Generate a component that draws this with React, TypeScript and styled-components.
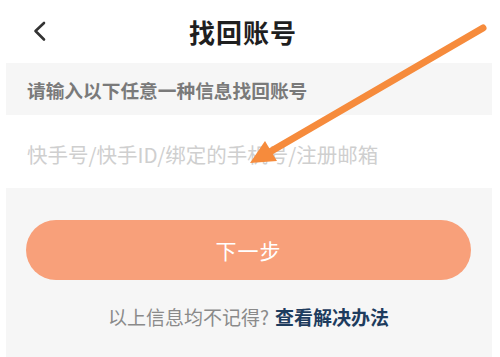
import styled, { createGlobalStyle } from "styled-components";

const GlobalStyle = createGlobalStyle`
  html, body {
    margin: 0;
    padding: 0;
    background: #ffffff;
    font-family: "Noto Sans CJK SC", "Noto Sans", sans-serif;
  }
`;

const Page = styled.div`
  position: relative;
  width: 500px;
  height: 357px;
  overflow: hidden;
  background: #ffffff;
`;

const Header = styled.div`
  position: relative;
  display: flex;
  align-items: center;
  justify-content: center;
  height: 63px;
`;

const Back = styled.div`
  position: absolute;
  left: 32px;
  top: 20px;
  display: flex;
`;

const Title = styled.h1`
  margin: 0 14px 0 0;
  font-size: 26px;
  font-weight: 700;
  color: #1f1f1f;
  letter-spacing: 1px;
`;

const Panel = styled.div`
  margin: 0 8px 0 6px;
  display: flex;
  flex-direction: column;
  background: #f6f6f6;
  height: 294px;
`;

const Hint = styled.div`
  height: 52px;
  display: flex;
  align-items: center;
  padding-left: 21px;
  font-size: 18.7px;
  font-weight: 700;
  color: #7a7a7a;
`;

const InputRow = styled.div`
  height: 73px;
  display: flex;
  align-items: center;
  padding: 4px 0 0 21px;
  box-sizing: border-box;
  background: #ffffff;
`;

const Placeholder = styled.span`
  font-size: 20.5px;
  color: #cfcfcf;
`;

const Actions = styled.div`
  display: flex;
  flex-direction: column;
  align-items: center;
  padding: 32px 21px 0 20px;
`;

const NextButton = styled.button`
  width: 100%;
  height: 60px;
  border: 0;
  border-radius: 30px;
  background: #f8a07a;
  color: #ffffff;
  font-family: inherit;
  font-size: 21px;
  letter-spacing: 1px;
`;

const Footer = styled.div`
  margin-top: 23px;
  font-size: 19px;
  color: #8a8a8a;
  display: flex;
  align-items: center;
`;

const Link = styled.span`
  margin-left: 6px;
  font-weight: 700;
  color: #1e3c5e;
`;

// annotation arrow drawn over the screenshot
const Pointer = styled.svg`
  position: absolute;
  left: 0;
  top: 0;
  pointer-events: none;
`;

const App = () => {
  return (
    <>
      <GlobalStyle />
      <Page>
        <Header>
          <Back>
            <svg width="16" height="22" viewBox="0 0 16 22">
              <path
                d="M12 3 L3.5 11 L12 19.5"
                fill="none"
                stroke="#333"
                strokeWidth="2.6"
                strokeLinecap="round"
                strokeLinejoin="round"
              />
            </svg>
          </Back>
          <Title>找回账号</Title>
        </Header>

        <Panel>
          <Hint>请输入以下任意一种信息找回账号</Hint>
          <InputRow>
            <Placeholder>快手号/快手ID/绑定的手机号/注册邮箱</Placeholder>
          </InputRow>
          <Actions>
            <NextButton>下一步</NextButton>
            <Footer>
              以上信息均不记得?
              <Link>查看解决办法</Link>
            </Footer>
          </Actions>
        </Panel>

        <Pointer width="500" height="357" viewBox="0 0 500 357">
          <line
            x1="483"
            y1="28"
            x2="268"
            y2="153"
            stroke="#f68b3c"
            strokeWidth="7"
            strokeLinecap="round"
          />
          <polygon points="250,163 265,141 277,161" fill="#f68b3c" />
        </Pointer>
      </Page>
    </>
  );
};

export default App;
